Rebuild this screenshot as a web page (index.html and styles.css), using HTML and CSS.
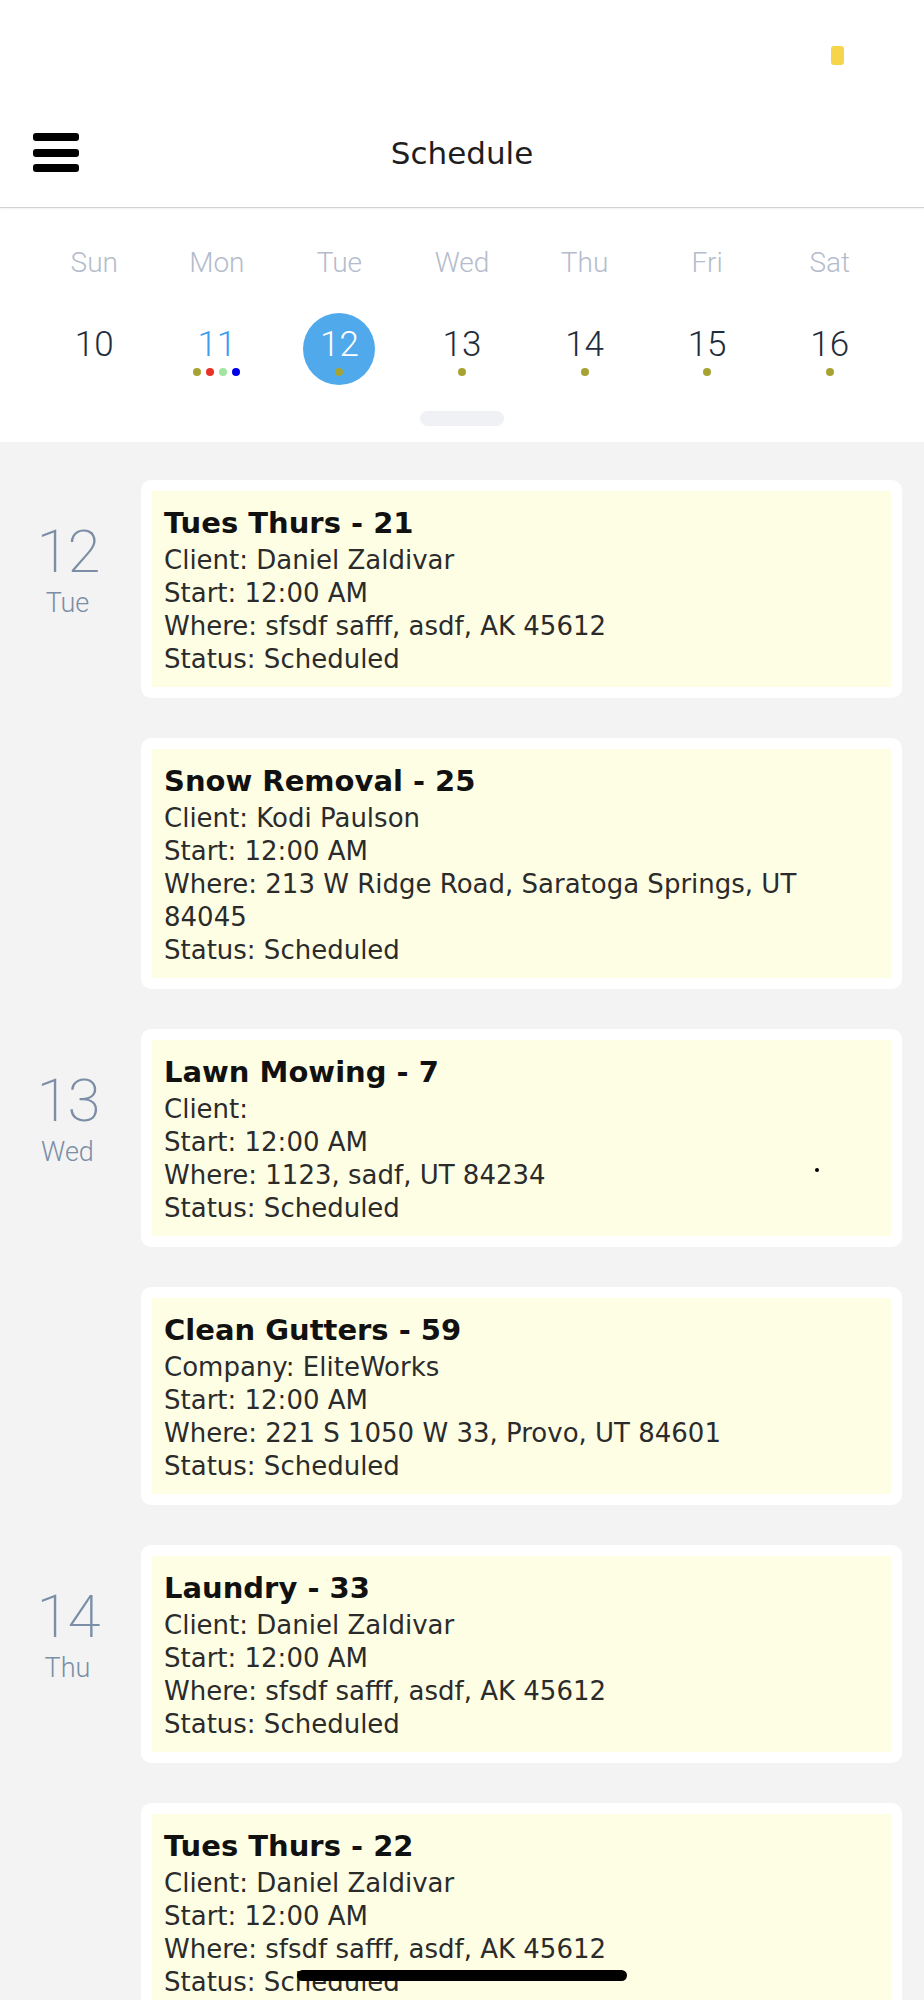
FILE: index.html
```html
<!DOCTYPE html>
<html lang="en">

<head>
    <title>Schedule</title>
    <meta charset="utf-8">
    <meta name="viewport" content="width=device-width, initial-scale=1">
    <link rel="stylesheet" href="styles.css">
</head>

<body>
    <div class="screen">
        <div class="status">
            <span class="battery"></span>
        </div>

        <header class="topbar">
            <button class="menu-btn" aria-label="Menu">
                <span></span>
                <span></span>
                <span></span>
            </button>
            <h1>Schedule</h1>
            <div></div>
        </header>

        <section class="week">
            <div class="week-names">
                <span>Sun</span>
                <span>Mon</span>
                <span>Tue</span>
                <span>Wed</span>
                <span>Thu</span>
                <span>Fri</span>
                <span>Sat</span>
            </div>
            <div class="week-days">
                <div class="day-cell"><span class="num">10</span><span class="dots"></span></div>
                <div class="day-cell today">
                    <span class="num">11</span>
                    <span class="dots">
                        <i class="dot olive"></i><i class="dot red"></i><i class="dot green"></i><i class="dot blue"></i>
                    </span>
                </div>
                <div class="day-cell selected"><span class="num">12</span><span class="dots"><i class="dot olive"></i></span></div>
                <div class="day-cell"><span class="num">13</span><span class="dots"><i class="dot olive"></i></span></div>
                <div class="day-cell"><span class="num">14</span><span class="dots"><i class="dot olive"></i></span></div>
                <div class="day-cell"><span class="num">15</span><span class="dots"><i class="dot olive"></i></span></div>
                <div class="day-cell"><span class="num">16</span><span class="dots"><i class="dot olive"></i></span></div>
            </div>
            <div class="handle"></div>
        </section>

        <main class="agenda">
            <div class="agenda-day">
                <div class="date-label">
                    <span class="date-num">12</span>
                    <span class="date-name">Tue</span>
                </div>
                <div class="cards">
                    <div class="card">
                        <div class="card-body">
                            <h2>Tues Thurs - 21</h2>
                            <p>Client: Daniel Zaldivar</p>
                            <p>Start: 12:00 AM</p>
                            <p>Where: sfsdf safff, asdf, AK 45612</p>
                            <p>Status: Scheduled</p>
                        </div>
                    </div>
                    <div class="card">
                        <div class="card-body">
                            <h2>Snow Removal - 25</h2>
                            <p>Client: Kodi Paulson</p>
                            <p>Start: 12:00 AM</p>
                            <p>Where: 213 W Ridge Road, Saratoga Springs, UT 84045</p>
                            <p>Status: Scheduled</p>
                        </div>
                    </div>
                </div>
            </div>

            <div class="agenda-day">
                <div class="date-label">
                    <span class="date-num">13</span>
                    <span class="date-name">Wed</span>
                </div>
                <div class="cards">
                    <div class="card">
                        <div class="card-body">
                            <h2>Lawn Mowing - 7</h2>
                            <p>Client:</p>
                            <p>Start: 12:00 AM</p>
                            <p>Where: 1123, sadf, UT 84234</p>
                            <p>Status: Scheduled</p>
                        </div>
                        <span class="speck"></span>
                    </div>
                    <div class="card">
                        <div class="card-body">
                            <h2>Clean Gutters - 59</h2>
                            <p>Company: EliteWorks</p>
                            <p>Start: 12:00 AM</p>
                            <p>Where: 221 S 1050 W 33, Provo, UT 84601</p>
                            <p>Status: Scheduled</p>
                        </div>
                    </div>
                </div>
            </div>

            <div class="agenda-day">
                <div class="date-label">
                    <span class="date-num">14</span>
                    <span class="date-name">Thu</span>
                </div>
                <div class="cards">
                    <div class="card">
                        <div class="card-body">
                            <h2>Laundry - 33</h2>
                            <p>Client: Daniel Zaldivar</p>
                            <p>Start: 12:00 AM</p>
                            <p>Where: sfsdf safff, asdf, AK 45612</p>
                            <p>Status: Scheduled</p>
                        </div>
                    </div>
                    <div class="card">
                        <div class="card-body">
                            <h2>Tues Thurs - 22</h2>
                            <p>Client: Daniel Zaldivar</p>
                            <p>Start: 12:00 AM</p>
                            <p>Where: sfsdf safff, asdf, AK 45612</p>
                            <p>Status: Scheduled</p>
                        </div>
                    </div>
                </div>
            </div>
        </main>

        <div class="home-bar"></div>
    </div>
</body>

</html>
```

FILE: styles.css
```css
* {
    box-sizing: border-box;
}

body {
    margin: 0;
    font-family: "DejaVu Sans", sans-serif;
    background: #f3f3f3;
}

.screen {
    position: relative;
    width: 924px;
    height: 2000px;
    overflow: hidden;
    background: #f3f3f3;
}

/* Status bar */
.status {
    height: 98px;
    background: #fff;
    display: flex;
    justify-content: flex-end;
    padding: 46px 80px 0 0;
}

.battery {
    width: 13px;
    height: 19px;
    border-radius: 3px;
    background: #f6d54b;
}

/* Top bar */
.topbar {
    height: 110px;
    background: #fff;
    border-bottom: 1px solid #d2d2d2;
    box-shadow: 0 1px 2px rgba(0, 0, 0, 0.06);
    display: grid;
    grid-template-columns: 1fr auto 1fr;
    align-items: center;
    padding: 0 33px;
    position: relative;
    z-index: 1;
}

.menu-btn {
    display: flex;
    flex-direction: column;
    gap: 7.5px;
    width: 46px;
    padding: 0;
    border: 0;
    background: none;
}

.menu-btn span {
    height: 8px;
    border-radius: 3px;
    background: #000;
}

.topbar h1 {
    margin: 0;
    font-size: 31px;
    font-weight: normal;
    color: #1e1e1e;
}

/* Week strip */
.week {
    background: #fff;
    padding: 40px 33px 16px;
    font-family: Roboto, sans-serif;
}

.week-names,
.week-days {
    display: grid;
    grid-template-columns: repeat(7, 1fr);
}

.week-names span {
    text-align: center;
    font-size: 28px;
    line-height: 30px;
    font-weight: 300;
    color: #b4bccb;
}

.week-days {
    margin-top: 35px;
    justify-items: center;
}

.day-cell {
    width: 72px;
    height: 72px;
    border-radius: 50%;
    display: flex;
    flex-direction: column;
    align-items: center;
    padding-top: 12px;
}

.num {
    font-size: 35px;
    line-height: 40px;
    font-weight: 300;
    color: #1f2d3d;
}

.dots {
    display: flex;
    gap: 5px;
    height: 8px;
    margin-top: 3px;
}

.dot {
    width: 8px;
    height: 8px;
    border-radius: 50%;
}

.dot.olive { background: #a6a333; }
.dot.red { background: #e8322a; }
.dot.green { background: #a2e5a0; }
.dot.blue { background: #0000e6; }

.day-cell.today .num {
    color: #3a9ff0;
}

.day-cell.selected {
    background: #4fa9ea;
}

.day-cell.selected .num {
    color: #fff;
}

.handle {
    width: 84px;
    height: 15px;
    border-radius: 8px;
    background: #f0f1f4;
    margin: 26px auto 0;
}

/* Agenda list */
.agenda {
    display: flex;
    flex-direction: column;
    gap: 40px;
    padding: 38px 22px 0 0;
}

.agenda-day {
    display: grid;
    grid-template-columns: 141px 1fr;
}

.date-label {
    display: flex;
    flex-direction: column;
    align-items: center;
    padding: 36px 6px 0 0;
    font-family: Roboto, sans-serif;
    color: #7b8ea6;
}

.date-num {
    font-size: 60px;
    line-height: 71px;
    font-weight: 200;
    letter-spacing: -2px;
}

.date-name {
    font-size: 27px;
    line-height: 32px;
    font-weight: 300;
}

.cards {
    display: flex;
    flex-direction: column;
    gap: 40px;
}

.card {
    position: relative;
    background: #fff;
    border-radius: 10px;
    padding: 11px;
}

.card-body {
    background: #fefee5;
    padding: 11px 12px;
}

.card h2 {
    margin: 0;
    font-size: 29px;
    line-height: 42px;
    font-weight: bold;
    color: #111;
}

.card p {
    margin: 0;
    font-size: 26px;
    line-height: 33px;
    color: #2b2b2b;
}

/* stray mark on the mowing card */
.speck {
    position: absolute;
    left: 674px;
    top: 139px;
    width: 4px;
    height: 4px;
    border-radius: 50%;
    background: #000;
}

/* iOS home indicator */
.home-bar {
    position: absolute;
    left: 297px;
    top: 1970px;
    width: 330px;
    height: 11px;
    border-radius: 6px;
    background: #000;
}
```
